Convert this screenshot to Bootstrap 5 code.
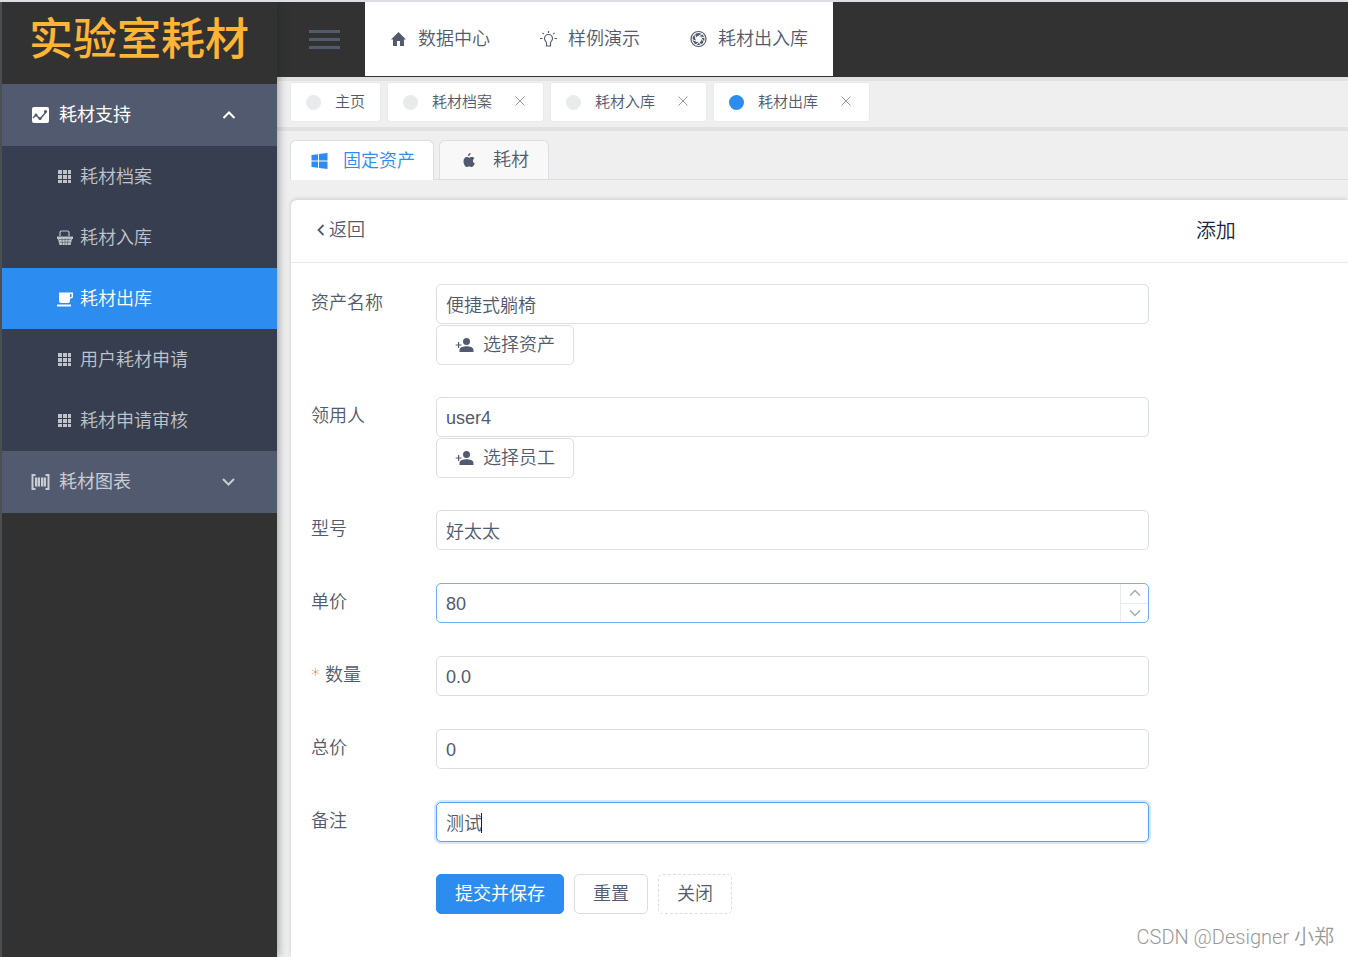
<!DOCTYPE html>
<html lang="zh-CN">
<head>
<meta charset="utf-8">
<meta name="viewport" content="width=device-width, initial-scale=1">
<title>实验室耗材</title>
<link href="https://cdn.jsdelivr.net/npm/bootstrap@5.3.0/dist/css/bootstrap.min.css" rel="stylesheet">
<style>
  :root { --ink: #515a6e; --blue: #2d8cf0; --line: #dcdee2; --dark: #323232; }
  body { font-family: "Liberation Sans", "Noto Sans CJK SC", sans-serif; font-size: 18px; font-weight: 350; line-height: 24px; color: var(--ink); background: #efefef; border-top: 2px solid #dcdee2; min-height: 100vh; }
  a { color: inherit; text-decoration: none; }
  svg { fill: currentColor; flex: none; display: block; }
  .shell { min-height: calc(100vh - 2px); }

  .side { width: 277px; flex: none; background: var(--dark); border-left: 2px solid #4c4f52; box-shadow: 2px 0 8px rgba(29,35,41,.35); position: relative; z-index: 2; }
  .brand { height: 82px; padding: 0 0 6px 27px; color: #ffb433; font-size: 44px; font-weight: 500; line-height: 60px; white-space: nowrap; }
  .side-group { height: 62px; padding: 0 40px 0 28px; gap: 9px; background: #515a6e; color: #c9ccd3; border: 0; width: 100%; text-align: left; }
  .side-group.is-open { color: #fff; }
  .side-item { height: 61px; padding-left: 54px; gap: 6px; background: #363e4f; color: #c0c3ca; }
  .side-item.is-active { background: var(--blue); color: #fff; }

  .main-col { min-width: 0; }
  .topbar { height: 75px; background: var(--dark); }
  .burger { width: 88px; border: 0; background: none; color: var(--ink); padding: 0 0 0 32px; }
  .topmenu { background: #fff; height: 74px; }
  .topmenu a { padding: 0 25px; gap: 10px; }

  .tagbar { height: 54px; padding: 1px 0 0 13px; gap: 6px; border-top: 4px solid #e1e1e1; border-bottom: 4px solid #e1e1e1; }
  .tag { height: 40px; padding: 0 15px; gap: 14px; font-size: 15px; background: #fff; border: 1px solid #e8eaec; border-radius: 3px; }
  .tag.can-close { padding-right: 18px; }
  .tag button { border: 0; background: none; padding: 0 0 2px; margin-left: 9px; color: #999; }
  .dot { width: 15px; height: 15px; border-radius: 50%; background: #e8eaec; }
  .dot.on { background: var(--blue); }

  .assets { margin: 9px 0 20px 13px; height: 40px; gap: 5px; border-bottom: 1px solid var(--line); }
  .assets button { height: 39px; padding: 0 19px; gap: 14px; border: 1px solid var(--line); border-bottom: 0; border-radius: 6px 6px 0 0; background: #f8f8f9; color: var(--ink); font-weight: 350; }
  .assets button.is-active { height: 40px; padding-right: 18px; background: #fff; color: var(--blue); }

  .sheet { margin-left: 14px; background: #fff; border-radius: 6px 0 0 0; box-shadow: 0 -1px 4px rgba(0,0,0,.15); }
  .sheet-head { height: 63px; border-bottom: 1px solid #e8eaec; }
  .sheet-head h1 { font-size: 20px; font-weight: 350; line-height: 24px; color: #17233d; }
  .entry { padding: 21px 199px 30px 20px; }
  .field { display: flex; margin-bottom: 33px; }
  .field.has-pick { margin-bottom: 32px; }
  .field label { width: 125px; flex: none; padding-top: 7px; }
  .field .form-control { height: 40px; padding: 0 9px; font-size: 18px; font-weight: 350; color: var(--ink); border-color: var(--line); border-radius: 5px; }
  .field .form-control.is-latin { padding-top: 2px; font-weight: 400; }
  .field .form-control.is-hot { border-color: #6fb0f5; }
  .field .form-control:focus, .field .form-control.is-focus { border-color: #57a3f3; box-shadow: 0 0 0 2px rgba(45,140,240,.2); }
  .note .form-control { caret-color: transparent; }
  .note-caret { position: absolute; left: 45px; top: 11px; width: 1px; height: 20px; background: #17233d; }
  .acts { gap: 10px; margin: -1px 0 0 125px; }
  .act { height: 40px; padding: 0 18px; font-size: 18px; font-weight: 350; line-height: 24px; color: var(--ink); background: #fff; border: 1px solid var(--line); border-radius: 5px; }
  .act.main { background: var(--blue); border-color: var(--blue); color: #fff; font-weight: 400; }
  .act.dashed { border-style: dashed; }
  .pick { margin-top: 1px; gap: 9px; }
  .stepper { position: absolute; right: 1px; top: 1px; bottom: 1px; width: 28px; border-left: 1px solid #e8eaec; display: flex; flex-direction: column; }
  .stepper button { flex: 1; border: 0; padding: 0; background: none; color: #aaa; display: flex; align-items: center; justify-content: center; }
  .stepper button + button { border-top: 1px solid #e8eaec; }
  .star { color: #ed4014; font-family: "DejaVu Sans", sans-serif; }
  .credit { position: absolute; right: 14px; bottom: 7px; font-family: Roboto, "Noto Sans CJK SC", sans-serif; font-size: 20px; line-height: 26px; color: #999; }
</style>
</head>
<body class="position-relative">
<svg width="0" height="0" class="position-absolute" aria-hidden="true">
  <symbol id="grid" viewBox="0 0 18 18"><path d="M2 2h4v4H2zM7 2h4v4H7zM12 2h3v4h-3zM2 7h4v4H2zM7 7h4v4H7zM12 7h3v4h-3zM2 12h4v3H2zM7 12h4v3H7zM12 12h3v3h-3z"/></symbol>
  <symbol id="cross" viewBox="0 0 10 10"><path d="M.5.5l9 9M9.500.5l-9 9" stroke="currentColor" fill="none"/></symbol>
  <symbol id="addperson" viewBox="0 0 18 16"><circle cx="11" cy="4.500" r="3.500"/><path d="M4 15v-2c0-3 4-3.800 7-3.800s7 .8 7 3.800v2zM2.500 5h1.200v2.400H6v1.200H3.700V11H2.500V8.600H.2V7.400h2.300z"/></symbol>
</svg>
<div class="shell d-flex">
  <nav class="side" aria-label="侧边菜单">
    <div class="brand d-flex align-items-center">实验室耗材</div>
    <button type="button" class="side-group is-open d-flex align-items-center">
      <svg width="20" height="18" viewBox="0 0 20 18"><rect x="2" y="1" width="17" height="16" rx="2"/><path d="M3 12l3-3 4 4 6-7" stroke="#515a6e" stroke-width="1.500" fill="none"/><g fill="#515a6e"><circle cx="6" cy="9" r="1.500"/><circle cx="10" cy="12.500" r="1.600"/><circle cx="15.500" cy="5.500" r="1.600"/></g></svg>
      <span class="flex-grow-1">耗材支持</span>
      <svg width="16" height="16" viewBox="0 0 16 16"><path d="M2.500 11L8 5.500l5.500 5.500" stroke="currentColor" stroke-width="2" fill="none"/></svg>
    </button>
    <a href="#" class="side-item d-flex align-items-center"><svg width="18" height="18"><use href="#grid"/></svg>耗材档案</a>
    <a href="#" class="side-item d-flex align-items-center"><svg width="18" height="18" viewBox="0 0 18 18"><path d="M4 7V3.500Q4 2 5.500 2h6Q13 2 13 3.500V7" fill="none" stroke="currentColor" stroke-width="1.200"/><path d="M1 7.500h16v2.500h-1l-1.500 6h-11L2 10H1z"/><path d="M3 10.500h12M3.500 13.300h11M6 9.500l.5 6.500M9 9.500V16M12 9.500l-.5 6.500" stroke="#363e4f" stroke-width=".5"/></svg>耗材入库</a>
    <a href="#" class="side-item is-active d-flex align-items-center" aria-current="page"><svg width="18" height="18" viewBox="0 0 18 18"><path d="M3 2.500h14v4q0 2-3 2V11q0 2-2 2H5q-2 0-2-2z"/><path d="M14 4h1.500v3H14z" fill="#2d8cf0"/><path d="M1 14.500h14v2H1z"/></svg>耗材出库</a>
    <a href="#" class="side-item d-flex align-items-center"><svg width="18" height="18"><use href="#grid"/></svg>用户耗材申请</a>
    <a href="#" class="side-item d-flex align-items-center"><svg width="18" height="18"><use href="#grid"/></svg>耗材申请审核</a>
    <button type="button" class="side-group d-flex align-items-center">
      <svg width="20" height="18" viewBox="0 0 20 18"><path d="M5.500 2h-3v14h3M15.500 2h3v14h-3" stroke="currentColor" stroke-width="2" fill="none"/><path d="M5 4.500h2.500v9H5zM8 4.500h2v9H8zM11 4.500h2v9h-2zM13.500 4.500H16v9h-2.500z"/></svg>
      <span class="flex-grow-1">耗材图表</span>
      <svg width="16" height="16" viewBox="0 0 16 16"><path d="M2 5l5.500 5.500L13 5" stroke="currentColor" stroke-width="2" fill="none"/></svg>
    </button>
  </nav>

  <div class="main-col flex-grow-1 d-flex flex-column">
    <header class="topbar d-flex">
      <button type="button" class="burger" aria-label="菜单"><svg width="31" height="21" viewBox="0 0 31 21"><path d="M0 1h31v3H0zM0 9h31v3H0zM0 17h31v3H0z"/></svg></button>
      <nav class="topmenu d-flex" aria-label="主菜单">
        <a href="#" class="d-flex align-items-center"><svg width="18" height="18" viewBox="0 0 18 18"><path d="M8.500 2L16 9.500h-2V16h-4v-5H7v5H3V9.500H1z"/></svg>数据中心</a>
        <a href="#" class="d-flex align-items-center"><svg width="18" height="18" viewBox="0 0 18 18"><g fill="none" stroke="currentColor" stroke-width="1.200"><path d="M6.500 13c0-1.500-2-2.200-2-4.500a4 4 0 0 1 8 0c0 2.300-2 3-2 4.500v3h-4zM8.500 1v2M0 8.500h2.500M14.500 8.500H17M2.500 2.800l1.300 1.300M14.500 2.800l-1.300 1.300"/></g></svg>样例演示</a>
        <a href="#" class="d-flex align-items-center"><svg width="18" height="18" viewBox="0 0 18 18"><circle cx="8.500" cy="9" r="7.500" fill="none" stroke="currentColor" stroke-width="1.200"/><circle cx="8.500" cy="9" r="4.500" fill="none" stroke="currentColor" stroke-width="3"/><path d="M6 9L4.500 3.500M8 6.500l5-3M11 8l3.500 4.500M10.500 11l-5 4M7 11.500L2 9.500M10.500 7l4 .5M9 12l2 3" stroke="#fff" stroke-width="1"/></svg>耗材出入库</a>
      </nav>
    </header>

    <div class="tagbar d-flex">
      <div class="tag d-flex align-items-center"><span class="dot"></span><a href="#">主页</a></div>
      <div class="tag can-close d-flex align-items-center"><span class="dot"></span><a href="#">耗材档案</a><button type="button" aria-label="关闭耗材档案"><svg width="10" height="10"><use href="#cross"/></svg></button></div>
      <div class="tag can-close d-flex align-items-center"><span class="dot"></span><a href="#">耗材入库</a><button type="button" aria-label="关闭耗材入库"><svg width="10" height="10"><use href="#cross"/></svg></button></div>
      <div class="tag can-close d-flex align-items-center"><span class="dot on"></span><a href="#">耗材出库</a><button type="button" aria-label="关闭耗材出库"><svg width="10" height="10"><use href="#cross"/></svg></button></div>
    </div>

    <div class="assets d-flex" role="tablist">
      <button type="button" role="tab" aria-selected="true" class="is-active d-flex align-items-center"><svg width="19" height="18" viewBox="0 0 19 18"><path d="M1.500 3l6.500-.8v6.300H1.500zM9 2l8.500-1v7.500H9zM1.500 9.500H8v6.300L1.500 15zM9 9.500h8.500V17L9 16z"/></svg>固定资产</button>
      <button type="button" role="tab" aria-selected="false" class="d-flex align-items-center"><svg width="20" height="18" viewBox="0 0 20 18"><path d="M11.500 2c.2 1.700-1 3-2.600 3C8.800 3.500 10 2.200 11.500 2zM15.800 12.500C15 14.500 13.800 16 12.700 16c-1 0-1.300-.6-2.500-.6s-1.600.6-2.500.6C6 16 4.500 13 4.500 10.300c0-2.600 1.600-4.200 3.200-4.200 1.100 0 1.900.7 2.600.7s1.600-.7 2.900-.7c.8 0 1.700.4 2.300 1.200-2.200 1.300-1.900 4.400.3 5.200z"/></svg>耗材</button>
    </div>

    <main class="sheet flex-grow-1">
      <div class="sheet-head row g-0 align-items-center">
        <div class="col-9"><a href="#" class="d-inline-flex align-items-center ps-4"><svg width="14" height="16" viewBox="0 0 14 16"><path d="M8.500 3L3.500 8l5 5" stroke="currentColor" stroke-width="1.800" fill="none"/></svg>返回</a></div>
        <h1 class="col-3 text-center m-0">添加</h1>
      </div>
      <form class="entry">
        <div class="field has-pick"><label for="f1">资产名称</label>
          <div class="flex-grow-1"><input id="f1" class="form-control" value="便捷式躺椅"><button type="button" class="act pick d-flex align-items-center"><svg width="19" height="16"><use href="#addperson"/></svg>选择资产</button></div></div>
        <div class="field has-pick"><label for="f2">领用人</label>
          <div class="flex-grow-1"><input id="f2" class="form-control is-latin" value="user4"><button type="button" class="act pick d-flex align-items-center"><svg width="19" height="16"><use href="#addperson"/></svg>选择员工</button></div></div>
        <div class="field"><label for="f3">型号</label><input id="f3" class="form-control" value="好太太"></div>
        <div class="field"><label for="f4">单价</label>
          <div class="flex-grow-1 position-relative"><input id="f4" class="form-control is-latin is-hot" inputmode="decimal" value="80">
            <div class="stepper"><button type="button" aria-label="增加"><svg width="12" height="8" viewBox="0 0 12 8"><path d="M1 6.500l5-5 5 5" stroke="currentColor" stroke-width="1.500" fill="none"/></svg></button><button type="button" aria-label="减少"><svg width="12" height="8" viewBox="0 0 12 8"><path d="M1 1.500l5 5 5-5" stroke="currentColor" stroke-width="1.500" fill="none"/></svg></button></div></div></div>
        <div class="field"><label for="f5"><span class="star">*</span> 数量</label><input id="f5" class="form-control is-latin" value="0.0" required></div>
        <div class="field"><label for="f6">总价</label><input id="f6" class="form-control is-latin" value="0"></div>
        <div class="field"><label for="f7">备注</label>
          <div class="note flex-grow-1 position-relative"><input id="f7" class="form-control is-focus" value="测试"><span class="note-caret"></span></div></div>
        <div class="acts d-flex"><button type="submit" class="act main">提交并保存</button><button type="reset" class="act">重置</button><button type="button" class="act dashed">关闭</button></div>
      </form>
    </main>
  </div>
</div>
<div class="credit">CSDN @Designer 小郑</div>
<script src="https://cdn.jsdelivr.net/npm/bootstrap@5.3.0/dist/js/bootstrap.bundle.min.js"></script>
</body>
</html>
